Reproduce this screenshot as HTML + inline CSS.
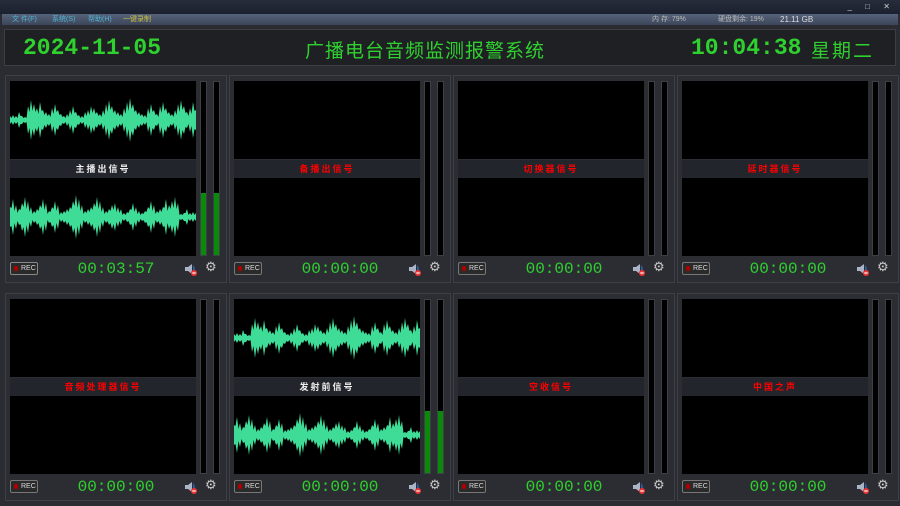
<!DOCTYPE html>
<html><head><meta charset="utf-8">
<style>
*{margin:0;padding:0;box-sizing:border-box}
body{width:900px;height:506px;overflow:hidden;background:#2a2c31;font-family:"Liberation Sans","Noto Sans CJK SC",sans-serif;position:relative}
.tb{position:absolute;left:0;top:0;width:900px;height:14px;background:linear-gradient(#262c3a,#1c2130)}
.mb{position:absolute;left:2px;top:14px;width:896px;height:11px;background:linear-gradient(#56627a,#3c465a);font-size:7px;line-height:11px;color:#4fb4d4}
.mb span{position:absolute;top:0}
.hd{position:absolute;left:4px;top:29px;width:892px;height:37px;background:#1f2023;border:1px solid #3c3e44}
.g{position:absolute;color:#2fd12f;font-family:"Liberation Mono",monospace;font-weight:bold}
.p{position:absolute;width:222px;height:208px;background:#2b2d33;border:1px solid #3d4047}
.w{position:absolute;left:4px;width:186px;height:78px;background:#000}
.w svg{display:block}
.lb{position:absolute;left:4px;top:84px;width:186px;height:18px;line-height:18px;text-align:center;font-size:9px;font-weight:bold;letter-spacing:2px;color:#f00;background:#22252b}
.m{position:absolute;top:5px;width:7px;height:175px;background:#000;border:1px solid #3d4047}
.m i{position:absolute;left:0;bottom:0;width:5px;height:62px;background:#0a8a0a}
.rec{position:absolute;left:4px;top:186px;width:28px;height:13px;border:1px solid #777;background:#2a2a2a;border-radius:2px;font-size:7px;color:#ddd;line-height:11px;padding-left:10px}
.rec:before{content:"";position:absolute;left:3px;top:3px;width:4px;height:5px;background:#a00;border-radius:1px}
.t{position:absolute;left:60px;top:184px;width:100px;text-align:center;font-size:16px;color:#2fd12f;font-family:"Liberation Mono",monospace}
.sp{position:absolute;left:178px;top:187px}
.gr{position:absolute;left:199px;top:183px;font-size:13px;color:#c8c8c8}
</style></head><body>
<svg width="0" height="0" style="position:absolute"><defs>
<path id="wv" d="M0,39 L0,35 1.5,37 3,34 4.5,37 6,35 7.5,37 9,31 10.5,35 12,35 13.5,37 15,36 16.5,37 18,25 19.5,31 21,19 22.5,30 24,23 25.5,31 27,27 28.5,33 30,21 31.5,30 33,29 34.5,34 36,31 37.5,35 39,33 40.5,36 42,27 43.5,33 45,23 46.5,31 48,29 49.5,34 51,33 52.5,36 54,35 55.5,37 57,33 58.5,36 60,29 61.5,34 63,25 64.5,32 66,31 67.5,35 69,34 70.5,37 72,35 73.5,37 75,31 76.5,35 78,29 79.5,34 81,25 82.5,32 84,27 85.5,33 87,31 88.5,35 90,33 91.5,36 93,29 94.5,34 96,23 97.5,31 99,19 100.5,29 102,25 103.5,32 105,29 106.5,34 108,31 109.5,35 111,33 112.5,36 114,27 115.5,33 117,21 118.5,30 120,17 121.5,28 123,23 124.5,31 126,29 127.5,34 129,31 130.5,35 132,33 133.5,36 135,34 136.5,37 138,27 139.5,33 141,23 142.5,31 144,29 145.5,34 147,33 148.5,36 150,25 151.5,32 153,21 154.5,30 156,27 157.5,33 159,31 160.5,35 162,33 163.5,36 165,29 166.5,34 168,23 169.5,31 171,19 172.5,29 174,25 175.5,32 177,31 178.5,35 180,27 181.5,33 183,21 184.5,30 186,29 186,39 Z"/>
<g id="wave"><use href="#wv"/><use href="#wv" transform="matrix(1 0 0 -1 0 78)"/></g>
<g id="spk"><path d="M1,4 H4 L8,1 V11 L4,8 H1 Z" fill="#aab4c4"/><path d="M9,2 Q13,6 9,10" fill="#2a5a9a"/><circle cx="10" cy="10" r="3" fill="#e33"/><rect x="8.3" y="9.4" width="3.4" height="1.2" fill="#fff"/></g>
</defs></svg>

<div class="tb"><span style="position:absolute;right:48px;top:2px;color:#ccc;font-size:8px">_</span><span style="position:absolute;right:30px;top:2px;color:#ccc;font-size:8px">□</span><span style="position:absolute;right:10px;top:2px;color:#ccc;font-size:8px">✕</span></div>
<div class="mb"><span style="left:10px">文 件(F)</span><span style="left:50px">系统(S)</span><span style="left:86px">帮助(H)</span><span style="left:121px;color:#c8c040">一键录制</span>
<span style="left:650px;color:#bbb">内 存: 79%</span><span style="left:716px;color:#bbb">硬盘剩余: 19%</span><span style="left:778px;color:#ddd;font-size:8px">21.11 GB</span></div>
<div class="hd">
<div class="g" style="left:18px;top:5px;font-size:23px">2024-11-05</div>
<div class="g" style="left:300px;top:6px;font-size:19px;font-family:'Liberation Sans','Noto Sans CJK SC',sans-serif;font-weight:normal;letter-spacing:1px">广播电台音频监测报警系统</div>
<div class="g" style="left:686px;top:5px;font-size:23px">10:04:38</div>
<div class="g" style="left:806px;top:6px;font-size:19px;font-family:'Liberation Sans','Noto Sans CJK SC',sans-serif;font-weight:normal;letter-spacing:2px">星期二</div>
</div>

<div class="p" style="left:5px;top:75px">
<div class="w" style="top:5px"><svg width="186" height="78" fill="#3fdc98"><use href="#wave"/></svg></div>
<div class="lb" style="color:#eee">主播出信号</div>
<div class="w" style="top:102px"><svg width="186" height="78" fill="#3fdc98"><use href="#wave" transform="translate(186,0) scale(-1,1)"/></svg></div>
<div class="m" style="left:194px"><i></i></div><div class="m" style="left:207px"><i></i></div>
<div class="rec" style="border-color:#888">REC</div><div class="t">00:03:57</div>
<svg class="sp" width="14" height="13"><use href="#spk"/></svg><div class="gr">⚙</div>
</div>
<div class="p" style="left:229px;top:75px">
<div class="w" style="top:5px"></div><div class="lb">备播出信号</div><div class="w" style="top:102px"></div>
<div class="m" style="left:194px"></div><div class="m" style="left:207px"></div>
<div class="rec">REC</div><div class="t">00:00:00</div>
<svg class="sp" width="14" height="13"><use href="#spk"/></svg><div class="gr">⚙</div>
</div>
<div class="p" style="left:453px;top:75px">
<div class="w" style="top:5px"></div><div class="lb">切换器信号</div><div class="w" style="top:102px"></div>
<div class="m" style="left:194px"></div><div class="m" style="left:207px"></div>
<div class="rec">REC</div><div class="t">00:00:00</div>
<svg class="sp" width="14" height="13"><use href="#spk"/></svg><div class="gr">⚙</div>
</div>
<div class="p" style="left:677px;top:75px">
<div class="w" style="top:5px"></div><div class="lb">延时器信号</div><div class="w" style="top:102px"></div>
<div class="m" style="left:194px"></div><div class="m" style="left:207px"></div>
<div class="rec">REC</div><div class="t">00:00:00</div>
<svg class="sp" width="14" height="13"><use href="#spk"/></svg><div class="gr">⚙</div>
</div>

<div class="p" style="left:5px;top:293px">
<div class="w" style="top:5px"></div><div class="lb">音频处理器信号</div><div class="w" style="top:102px"></div>
<div class="m" style="left:194px"></div><div class="m" style="left:207px"></div>
<div class="rec">REC</div><div class="t">00:00:00</div>
<svg class="sp" width="14" height="13"><use href="#spk"/></svg><div class="gr">⚙</div>
</div>
<div class="p" style="left:229px;top:293px">
<div class="w" style="top:5px"><svg width="186" height="78" fill="#3fdc98"><use href="#wave"/></svg></div>
<div class="lb" style="color:#eee">发射前信号</div>
<div class="w" style="top:102px"><svg width="186" height="78" fill="#3fdc98"><use href="#wave" transform="translate(186,0) scale(-1,1)"/></svg></div>
<div class="m" style="left:194px"><i></i></div><div class="m" style="left:207px"><i></i></div>
<div class="rec">REC</div><div class="t">00:00:00</div>
<svg class="sp" width="14" height="13"><use href="#spk"/></svg><div class="gr">⚙</div>
</div>
<div class="p" style="left:453px;top:293px">
<div class="w" style="top:5px"></div><div class="lb">空收信号</div><div class="w" style="top:102px"></div>
<div class="m" style="left:194px"></div><div class="m" style="left:207px"></div>
<div class="rec">REC</div><div class="t">00:00:00</div>
<svg class="sp" width="14" height="13"><use href="#spk"/></svg><div class="gr">⚙</div>
</div>
<div class="p" style="left:677px;top:293px">
<div class="w" style="top:5px"></div><div class="lb">中国之声</div><div class="w" style="top:102px"></div>
<div class="m" style="left:194px"></div><div class="m" style="left:207px"></div>
<div class="rec">REC</div><div class="t">00:00:00</div>
<svg class="sp" width="14" height="13"><use href="#spk"/></svg><div class="gr">⚙</div>
</div>
</body></html>
